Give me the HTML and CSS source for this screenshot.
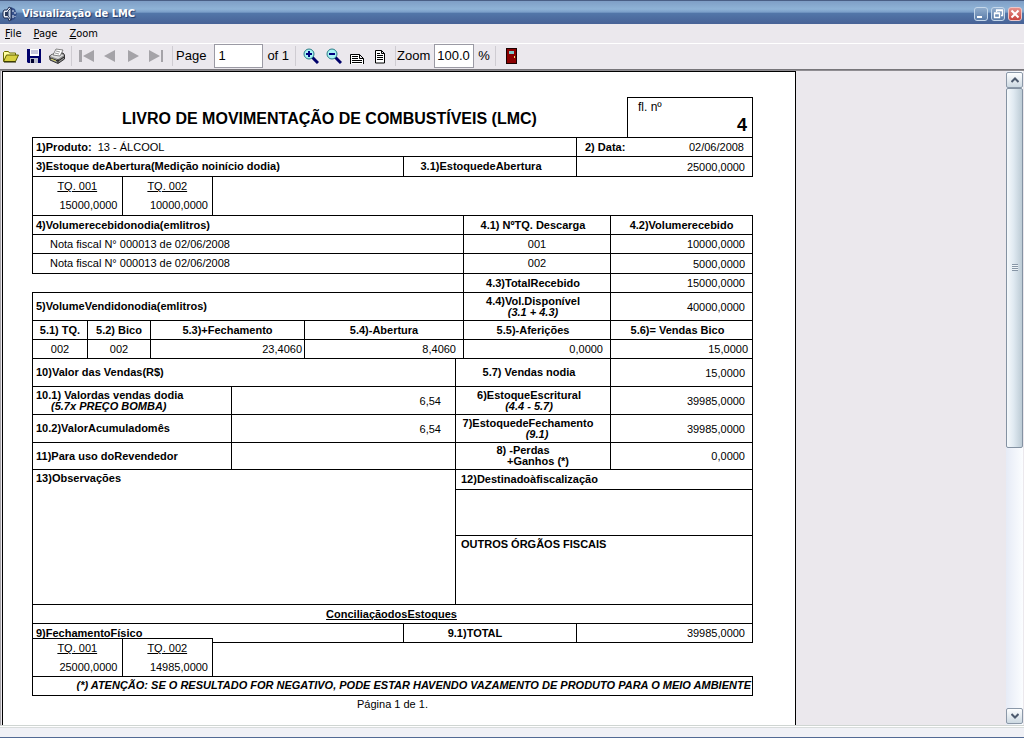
FILE: index.html
```html
<!DOCTYPE html>
<html lang="pt-BR">
<head>
<meta charset="utf-8">
<title>Visualização de LMC</title>
<link rel="stylesheet" href="styles.css">
</head>
<body>
<header class="titlebar">
  <svg class="app-icon" viewBox="0 0 16 16" aria-hidden="true"><path d="M9 1l2 1 2 1 1 3 1 2-1 2-1 3-2 1-2 1z" fill="#35508a"/><path d="M7 1l2 1v12l-2 1-1-3H2L1 10V6l1-2h3z" fill="#e9eef6" stroke="#1c2b50"/><path d="M3 6h3v4H3z" fill="#2c3c5c"/><path d="M6 5l3-3v12l-3-4z" fill="#c4d2e4" stroke="#263862"/><path d="M11 4v2M13 6v2M11 9v3M13 10v1" stroke="#e4ecf8"/></svg>
  <h1 class="window-title">Visualização de LMC</h1>
  <div class="window-buttons">
    <button class="win" aria-label="Minimizar"><svg viewBox="0 0 12 12"><path d="M2 9h5" stroke="#fff" stroke-width="2"/></svg></button>
    <button class="win" aria-label="Restaurar"><svg viewBox="0 0 12 12"><path d="M4.500 4V2.500h6v5H9M2.500 5.500h5v4h-5zM2 5h6M4 2h7" fill="none" stroke="#fff" stroke-width="1.300"/></svg></button>
    <button class="win close" aria-label="Fechar"><svg viewBox="0 0 12 12"><path d="M2.500 2.500l7 7M9.500 2.500l-7 7" stroke="#fff" stroke-width="2"/></svg></button>
  </div>
</header>
<nav class="menubar">
  <button><u>F</u>ile</button>
  <button><u>P</u>age</button>
  <button><u>Z</u>oom</button>
</nav>
<div class="toolbar" role="toolbar">
  <div class="group files">
    <button aria-label="Open"><svg viewBox="0 0 16 16"><path d="M.5 13V4.500l1-1h4l1 1.500h6V7" fill="#ffffa0" stroke="#6b6b00"/><path d="M.5 13.500L3.500 7h12l-3 6.500z" fill="#d8d040" stroke="#5a5a00"/><path d="M1 14h12" stroke="#222200"/></svg></button>
    <button aria-label="Save"><svg viewBox="0 0 16 16"><path d="M1 1h14v14H2L1 14z" fill="#00006b"/><path d="M4 1h9v7H4z" fill="#fff"/><path d="M5 3h7M5 5h7" stroke="#8c8cb8"/><path d="M4 10h8v5H4z" fill="#b9bccb"/><path d="M5 11h3v4H5z" fill="#00002e"/></svg></button>
    <button aria-label="Print"><svg viewBox="0 0 16 16"><path d="M.5 8L4 6l10-1 1.500 2v4L9 15.500 1 12z" fill="#8f8f8f" stroke="#333"/><path d="M1 8l5-3 9 2-6 4z" fill="#ddd"/><path d="M4 7l3-6 7 1-3 6z" fill="#fff" stroke="#555" stroke-width=".7"/><path d="M7 3l4 1M6 5l4 1" stroke="#999"/><path d="M1 10l8 3 6-4M9 11v4" fill="none" stroke="#222"/><path d="M2 11l5 2" stroke="#d7d36a"/></svg></button>
  </div>
  <div class="group nav">
    <button aria-label="First page"><svg viewBox="0 0 16 16"><path d="M0 2h3v12H0zM15 2v12L4 8z" fill="#a5a3a8"/></svg></button>
    <button aria-label="Previous page"><svg viewBox="0 0 16 16"><path d="M13 2v12L2 8z" fill="#a5a3a8"/></svg></button>
    <button aria-label="Next page"><svg viewBox="0 0 16 16"><path d="M3 2v12l11-6z" fill="#a5a3a8"/></svg></button>
    <button aria-label="Last page"><svg viewBox="0 0 16 16"><path d="M1 2v12l11-6zM13 2h2v12h-2z" fill="#a5a3a8"/></svg></button>
  </div>
  <div class="group page">
    <label for="page-number">Page</label>
    <input id="page-number" type="text" value="1">
    <span class="total">of 1</span>
  </div>
  <div class="group views">
    <button aria-label="Zoom in"><svg viewBox="0 0 16 16"><path d="M9 9l6 6" stroke="#00006b" stroke-width="3"/><circle cx="6" cy="6" r="5" fill="#a8f4f4" stroke="#2d7c86"/><path d="M3 6h6M6 3v6" stroke="#000080" stroke-width="2"/></svg></button>
    <button aria-label="Zoom out"><svg viewBox="0 0 16 16"><path d="M9 9l6 6" stroke="#00006b" stroke-width="3"/><circle cx="6" cy="6" r="5" fill="#a8f4f4" stroke="#2d7c86"/><path d="M3 6h6" stroke="#000080" stroke-width="2"/></svg></button>
    <button aria-label="Page width"><svg viewBox="0 0 16 16"><path d="M1.500 16V6.500h9l4 4V16M10.500 6.500v4h4" fill="#fff" stroke="#000"/><path d="M3 8.500h6M3 10.500h6M3 12.500h10M3 14.500h10" stroke="#000"/></svg></button>
    <button aria-label="Whole page"><svg viewBox="0 0 16 16"><path d="M3.500 2.500h6l3 3v9.500h-9zM9.500 2.500v3h3" fill="#fff" stroke="#000"/><path d="M5 5.500h3M5 7.500h6M5 9.500h6M5 11.500h6" stroke="#000"/></svg></button>
  </div>
  <div class="group zoom">
    <label for="zoom-level">Zoom</label>
    <input id="zoom-level" type="text" value="100.0">
    <span>%</span>
  </div>
  <div class="group exit">
    <button aria-label="Close preview"><svg viewBox="0 0 16 16"><path d="M3 0h11v16H3z" fill="#1c0000"/><path d="M4 1h9v14H4z" fill="#8b0000"/><path d="M6 3h5v3H6z" fill="#7cc8c8"/><path d="M11 8h1v2h-1z" fill="#f0e070"/></svg></button>
  </div>
</div>

<main class="preview">
  <article class="paper">
    <div class="heading">
      <h2>LIVRO DE MOVIMENTAÇÃO DE COMBUSTÍVEIS (LMC)</h2>
      <div class="sheet"><span>fl. nº</span><strong>4</strong></div>
    </div>

    <table class="top">
      <colgroup><col><col class="w173"><col class="w176"></colgroup>
      <tr><td class="edge label" colspan="2"><b>1)Produto:</b>&nbsp; 13 - ÁLCOOL</td><td class="date"><div><b>2) Data:</b><span>02/06/2008</span></div></td></tr>
      <tr class="h20"><th class="edge label">3)Estoque deAbertura(Medição noinício dodia)</th><th class="opening">3.1)EstoquedeAbertura</th><td class="num">25000,0000</td></tr>
    </table>

    <table class="tanks">
      <tr><th class="edge"><u>TQ. 001</u></th><th><u>TQ. 002</u></th></tr>
      <tr><td class="edge">15000,0000</td><td>10000,0000</td></tr>
    </table>

    <table class="top">
      <colgroup><col><col class="w147"><col class="w142"></colgroup>
      <tr><th class="edge label">4)Volumerecebidonodia(emlitros)</th><th class="lean">4.1) NºTQ. Descarga</th><th>4.2)Volumerecebido</th></tr>
      <tr><td class="edge note">Nota fiscal N° 000013 de 02/06/2008</td><td class="mid">001</td><td class="num">10000,0000</td></tr>
      <tr class="h20"><td class="edge note">Nota fiscal N° 000013 de 02/06/2008</td><td class="mid">002</td><td class="num">5000,0000</td></tr>
      <tr><td></td><th class="lean">4.3)TotalRecebido</th><td class="num">15000,0000</td></tr>
      <tr class="h28"><th class="edge label">5)VolumeVendidonodia(emlitros)</th><th class="lean">4.4)Vol.Disponível<br><i>(3.1 + 4.3)</i></th><td class="num">40000,0000</td></tr>
    </table>

    <table>
      <colgroup><col class="w56"><col class="w63"><col class="w154"><col><col class="w147"><col class="w142"></colgroup>
      <tr><th class="edge">5.1) TQ.</th><th>5.2) Bico</th><th>5.3)+Fechamento</th><th>5.4)-Abertura</th><th class="lean">5.5)-Aferições</th><th class="lean">5.6)= Vendas Bico</th></tr>
      <tr><td class="edge mid">002</td><td class="mid">002</td><td class="num tight">23,4060</td><td class="num">8,4060</td><td class="num">0,0000</td><td class="num near">15,0000</td></tr>
    </table>

    <table>
      <colgroup><col class="w200"><col><col class="w155"><col class="w142"></colgroup>
      <tr class="h28"><th class="edge label" colspan="2">10)Valor das Vendas(R$)</th><th class="lean">5.7) Vendas nodia</th><td class="num">15,0000</td></tr>
      <tr class="h28"><th class="edge label">10.1) Valordas vendas dodia<br><i class="inset">(5.7x PREÇO BOMBA)</i></th><td class="num far">6,54</td><th class="lean">6)EstoqueEscritural<br><i>(4.4 - 5.7)</i></th><td class="num">39985,0000</td></tr>
      <tr class="h28"><th class="edge label">10.2)ValorAcumuladomês</th><td class="num far">6,54</td><th class="closing">7)EstoquedeFechamento<br><i>(9.1)</i></th><td class="num">39985,0000</td></tr>
      <tr class="h27"><th class="edge label">11)Para uso doRevendedor</th><td></td><th class="losses">8) -Perdas<br><span class="gains">+Ganhos (*)</span></th><td class="num">0,0000</td></tr>
    </table>

    <table>
      <colgroup><col><col class="w297"></colgroup>
      <tr class="h20"><th class="edge label upper" rowspan="3">13)Observações</th><th class="label side">12)Destinadoàfiscalização</th></tr>
      <tr class="h46"><td></td></tr>
      <tr class="h69"><th class="label side upper">OUTROS ÓRGÃOS FISCAIS</th></tr>
    </table>

    <table>
      <colgroup><col><col class="w173"><col class="w176"></colgroup>
      <tr><th class="edge reconcile" colspan="3"><u>ConciliaçãodosEstoques</u></th></tr>
      <tr><th class="edge label">9)FechamentoFísico</th><th class="total-label">9.1)TOTAL</th><td class="num">39985,0000</td></tr>
    </table>

    <table class="tanks closing-tanks">
      <tr><th class="edge"><u>TQ. 001</u></th><th><u>TQ. 002</u></th></tr>
      <tr><td class="edge">25000,0000</td><td>14985,0000</td></tr>
    </table>

    <p class="warning">(*) ATENÇÃO: SE O RESULTADO FOR NEGATIVO, PODE ESTAR HAVENDO VAZAMENTO DE PRODUTO PARA O MEIO AMBIENTE</p>
    <footer class="page-count">Página 1 de 1.</footer>
  </article>
  <div class="scrollbar">
    <button class="arrow" aria-label="Rolar para cima"><svg viewBox="0 0 8 8"><path d="M0.500 6L4 2.500 7.500 6" fill="none" stroke="#4d5a6e" stroke-width="2"/></svg></button>
    <div class="track"><div class="thumb"><span class="grip"></span></div></div>
    <button class="arrow" aria-label="Rolar para baixo"><svg viewBox="0 0 8 8"><path d="M0.500 2L4 5.500 7.500 2" fill="none" stroke="#4d5a6e" stroke-width="2"/></svg></button>
  </div>
</main>
<div class="statusbar"></div>
</body>
</html>
```
FILE: styles.css
```css
* { box-sizing: border-box; }

body {
  margin: 0;
  height: 100vh;
  display: flex;
  flex-direction: column;
  overflow: hidden;
  background: #ebe8ed;
  color: #000;
  font: 11px/11px "Liberation Sans", Arial, sans-serif;
}

button {
  padding: 0;
  border: 0;
  background: none;
  color: inherit;
  font: inherit;
}

svg { display: block; }

/* Window chrome */
.titlebar {
  display: flex;
  align-items: center;
  gap: 4px;
  height: 24px;
  padding: 2px 2px 0;
  border-top: 1px solid #4a5f85;
  background: linear-gradient(#7f9fc6, #8fb3d6 35%, #7b9fc9 48%, #5276a8 54%, #476296);
}

.app-icon { width: 16px; height: 16px; }

.window-title {
  flex: 1;
  margin: 0;
  color: #fff;
  font: bold 11px/16px "DejaVu Sans Condensed", "DejaVu Sans", sans-serif;
  text-shadow: 1px 1px 1px #1f3768;
}

.window-buttons { display: flex; gap: 3px; }

.win {
  width: 14px;
  height: 14px;
  border: 1px solid #c5d7ea;
  border-radius: 3px;
  background: linear-gradient(#91adcd, #5a7ca9);
}

.win svg { width: 12px; height: 12px; }
.win.close { border-color: #ecc6c8; background: linear-gradient(#e6928c, #c8433d); }

.menubar {
  display: flex;
  gap: 12px;
  height: 19px;
  padding: 0 5px;
  font: 11px/18px "DejaVu Sans Condensed", "DejaVu Sans", sans-serif;
}

.toolbar {
  display: flex;
  align-items: center;
  height: 27px;
  padding-bottom: 2px;
  border-top: 1px solid #fff;
  border-bottom: 1px solid #77757a;
  font-size: 13px;
  line-height: 16px;
}

.group {
  display: flex;
  align-items: center;
  height: 20px;
  border-right: 1px solid #cfccd2;
}

.group svg { width: 16px; height: 16px; }

.group input {
  height: 24px;
  padding: 0 3px;
  border: 1px solid #9b9aa4;
  background: #fff;
  font: inherit;
}

.files { gap: 7px; padding: 0 6px 0 3px; }
.nav { gap: 7px; padding: 0 8px 0 7px; }
.page { gap: 4px; padding: 0 6px 0 3px; }
.page input { width: 49px; margin-left: 4px; }
.views { gap: 7px; padding: 0 7px; }
.zoom { gap: 4px; padding: 0 5px 0 1px; }
.zoom input { width: 40px; padding: 0 2px; }
.exit { padding-left: 7px; border: 0; }

/* Preview area */
.preview {
  flex: 1;
  display: flex;
  justify-content: space-between;
  min-height: 0;
  padding: 0 1px 0 2px;
  border-top: 1px solid #8f8d92;
  box-shadow: inset 1px 0 #a5a3a8;
}

.paper {
  flex: 0 1 794px;
  padding: 25px 42px 0 29px;
  border: 1px solid #000;
  border-bottom: 0;
  background: #fff;
}

.heading { display: flex; height: 40px; }

.heading h2 {
  flex: 1;
  margin: 0;
  padding-top: 12px;
  font-size: 16px;
  line-height: 20px;
  text-align: center;
}

.sheet {
  display: flex;
  flex-direction: column;
  width: 126px;
  padding: 2px 5px 0 10px;
  border: 1px solid #000;
  border-bottom: 0;
  font-size: 12px;
  line-height: 14px;
}

.sheet strong { align-self: flex-end; font-size: 18px; line-height: 22px; }

table {
  width: 100%;
  table-layout: fixed;
  border-spacing: 0;
}

.top { border-top: 1px solid #000; }

th, td {
  padding: 0;
  border: 0 solid #000;
  border-width: 0 1px 1px 0;
}

.edge { border-left-width: 1px; }

tr { height: 19px; }
.h20 { height: 20px; }
.h27 { height: 27px; }
.h28 { height: 28px; }
.h46 { height: 46px; }
.h69 { height: 69px; }

.w56 { width: 56px; }
.w63 { width: 63px; }
.w142 { width: 142px; }
.w147 { width: 147px; }
.w154 { width: 154px; }
.w155 { width: 155px; }
.w173 { width: 173px; }
.w176 { width: 176px; }
.w200 { width: 200px; }
.w297 { width: 297px; }

.label { padding-left: 3px; text-align: left; }
.side { padding-left: 5px; }
.upper { padding-top: 3px; vertical-align: top; }
.note { padding-left: 17px; }
.mid { text-align: center; }
.lean { padding-right: 8px; }
.opening { padding-right: 18px; }
.total-label { padding-right: 30px; }
.closing { padding-right: 10px; }
.closing i { padding-left: 18px; }
.losses { padding-right: 20px; }
.gains { padding-left: 30px; }
.inset { padding-left: 15px; }
.reconcile { padding-right: 2px; }

.num { padding: 1px 7px 0 0; text-align: right; }
.tight { padding-right: 2px; }
.near { padding-right: 4px; }
.far { padding-right: 14px; }

.date div {
  display: flex;
  justify-content: space-between;
  padding: 0 8px;
}

.tanks { width: 181px; background: #fff; }
.tanks th, .tanks td { border-bottom: 0; }
.tanks th { font-weight: normal; }
.tanks td { padding-right: 4px; text-align: right; }
.closing-tanks { margin-top: -5px; border-top: 1px solid #000; }
.closing-tanks tr + tr { height: 18px; }

.warning {
  margin: 0;
  padding: 3px 1px 4px;
  border: 1px solid #000;
  font-weight: bold;
  font-style: italic;
  text-align: right;
}

.page-count { padding-top: 3px; text-align: center; }

/* Scrollbar */
.scrollbar {
  display: flex;
  flex-direction: column;
  width: 17px;
  padding: 1px 0;
  background: linear-gradient(to right, #e6ebf6, #fbfdff);
}

.arrow {
  display: grid;
  place-items: center;
  height: 16px;
  border: 1px solid #8b98a8;
  border-radius: 2px;
  background: linear-gradient(#fdfeff, #cdd9e2);
}

.arrow svg { width: 8px; height: 8px; }

.track { flex: 1; }

.thumb {
  display: grid;
  place-items: center;
  height: 58%;
  border: 1px solid #8492a2;
  border-radius: 2px;
  background: linear-gradient(to right, #f5f9fc, #dfe9f1 45%, #bccbd5);
}

.grip {
  width: 6px;
  height: 7px;
  background: repeating-linear-gradient(#8796a6 0 1px, #eef4f8 1px 2px);
}

.statusbar {
  height: 13px;
  border-top: 1px solid #cfd5d2;
  border-bottom: 1px solid #526a94;
  background: #f0f1f6;
  box-shadow: inset 0 1px #fff, inset 0 2px #d8dcdc;
}
```
